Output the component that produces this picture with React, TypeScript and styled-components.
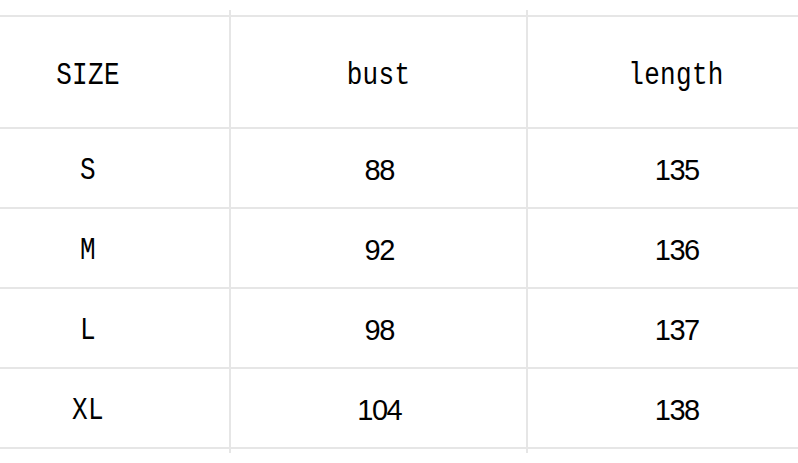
import React from "react";
import styled, { createGlobalStyle } from "styled-components";

const Global = createGlobalStyle`
  html, body {
    margin: 0;
    padding: 0;
    background: #ffffff;
    overflow: hidden;
  }
  #root {
    width: 798px;
    height: 463px;
    overflow: hidden;
  }
`;

const LINE = "#e6e6e6";
const COLS = "282px 297px 298px";

const Page = styled.div`
  width: 798px;
  height: 463px;
  padding-top: 15px;
  box-sizing: border-box;
  overflow: hidden;
  background: #fff;
`;

const Table = styled.div`
  display: grid;
  grid-template-columns: ${COLS};
  grid-template-rows: 112px repeat(4, 80px);
  width: 877px;
  margin-left: -53px;
  border-top: 2px solid ${LINE};
`;

const Cell = styled.div<{ $divider: boolean; $header: boolean }>`
  position: relative;
  display: flex;
  align-items: center;
  justify-content: center;
  padding-top: ${(p) => (p.$header ? "7px" : "5px")};
  box-sizing: border-box;
  border-bottom: 2px solid ${LINE};
  border-left: ${(p) => (p.$divider ? `2px solid ${LINE}` : "none")};
  color: #000;

  &::before {
    content: "";
    display: ${(p) => (p.$divider && p.$header ? "block" : "none")};
    position: absolute;
    left: -2px;
    top: -7px;
    width: 2px;
    height: 5px;
    background: ${LINE};
  }
`;

const Label = styled.span`
  display: inline-block;
  font-family: "Liberation Mono", "Noto Sans CJK SC", monospace;
  font-size: 26px;
  line-height: 1;
  letter-spacing: 0.3px;
  transform: scaleY(1.2);
`;

const Num = styled.span`
  font-family: "Liberation Sans", Arial, sans-serif;
  font-size: 29px;
  letter-spacing: -1.5px;
  line-height: 1;
  margin-right: -1.5px;
`;

const Tail = styled.div`
  display: grid;
  grid-template-columns: ${COLS};
  width: 877px;
  margin-left: -53px;
  height: 4px;
`;

const TailStub = styled.div<{ $divider: boolean }>`
  border-left: ${(p) => (p.$divider ? `2px solid ${LINE}` : "none")};
`;

const header = ["SIZE", "bust", "length"];
const rows = [
  ["S", "88", "135"],
  ["M", "92", "136"],
  ["L", "98", "137"],
  ["XL", "104", "138"],
];

export default function App() {
  return (
    <>
      <Global />
      <Page>
        <Table>
          {header.map((h, i) => (
            <Cell key={h} $divider={i > 0} $header>
              <Label>{h}</Label>
            </Cell>
          ))}
          {rows.map((r) =>
            r.map((v, i) => (
              <Cell key={r[0] + i} $divider={i > 0} $header={false}>
                {i === 0 ? <Label>{v}</Label> : <Num>{v}</Num>}
              </Cell>
            ))
          )}
        </Table>
        <Tail>
          <TailStub $divider={false} />
          <TailStub $divider />
          <TailStub $divider />
        </Tail>
      </Page>
    </>
  );
}
